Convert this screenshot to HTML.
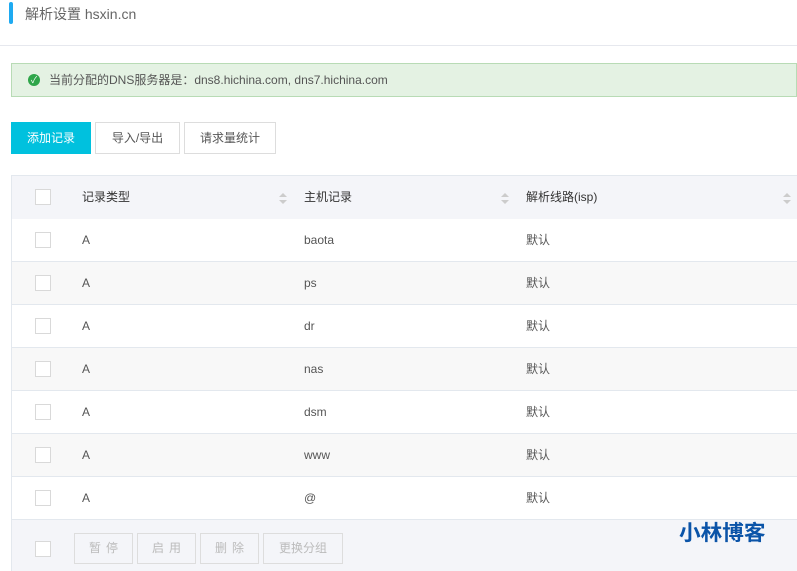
<!DOCTYPE html><html><head><meta charset="utf-8"><style>
body{margin:0;width:797px;height:571px;overflow:hidden;background:#fff;font-family:"Liberation Sans","Noto Sans CJK SC",sans-serif;color:#333;font-size:12px;position:relative;line-height:16px}
.a{position:absolute}
.cb{position:absolute;width:14px;height:14px;border:1px solid #d9d9d9;background:#fff;left:35px}
.row{position:absolute;left:11px;width:786px;height:42px;border-bottom:1px solid #e3e8ee;border-left:1px solid #e3e8ee}
.row span{position:absolute;top:13px;font-size:12px;color:#555;line-height:16px}
.sort{position:absolute;width:0;height:0;border-left:4px solid transparent;border-right:4px solid transparent}
.btn{position:absolute;top:533px;height:29px;border:1px solid #ddd;color:#bbb;text-align:center;line-height:29px;font-size:12px;letter-spacing:5px}
</style></head><body>
<div class="a" style="left:9px;top:2px;width:4px;height:22px;background:#1eaaf1;border-radius:2px"></div>
<div class="a" style="left:25px;top:6px;font-size:14px;color:#666">解析设置 hsxin.cn</div>
<div class="a" style="left:0;top:45px;width:797px;height:1px;background:#e6e8ee"></div>
<div class="a" style="left:11px;top:63px;width:786px;height:34px;background:#e4f2e3;border:1px solid #b8dbb5;box-sizing:border-box"></div>
<div class="a" style="left:28px;top:74px;width:12px;height:12px;border-radius:50%;background:#2fa64a;color:#fff;font-size:9px;line-height:12px;text-align:center">✓</div>
<div class="a" style="left:49px;top:72px;color:#555">当前分配的DNS服务器是：dns8.hichina.com, dns7.hichina.com</div>
<div class="a" style="left:11px;top:122px;width:80px;height:32px;background:#00c1de;color:#fff;line-height:32px;text-align:center">添加记录</div>
<div class="a" style="left:95px;top:122px;width:83px;height:30px;border:1px solid #ddd;color:#555;line-height:30px;text-align:center">导入/导出</div>
<div class="a" style="left:184px;top:122px;width:90px;height:30px;border:1px solid #ddd;color:#555;line-height:30px;text-align:center">请求量统计</div>
<div class="a" style="left:11px;top:175px;width:786px;height:43px;background:#f4f5f9;border:1px solid #e3e8ee;border-right:none"></div>
<div class="cb" style="top:189px"></div>
<div class="a" style="left:82px;top:189px;color:#333">记录类型</div>
<div class="a" style="left:304px;top:189px;color:#333">主机记录</div>
<div class="a" style="left:526px;top:189px;color:#333">解析线路(isp)</div>
<div class="sort" style="left:279px;top:193px;border-bottom:4px solid #ccc"></div><div class="sort" style="left:279px;top:200px;border-top:4px solid #ccc"></div>
<div class="sort" style="left:501px;top:193px;border-bottom:4px solid #ccc"></div><div class="sort" style="left:501px;top:200px;border-top:4px solid #ccc"></div>
<div class="sort" style="left:783px;top:193px;border-bottom:4px solid #ccc"></div><div class="sort" style="left:783px;top:200px;border-top:4px solid #ccc"></div>
<div class="row" style="top:219px;background:#fff"><span style="left:70px">A</span><span style="left:292px">baota</span><span style="left:514px">默认</span></div>
<div class="row" style="top:262px;background:#f8f8f8"><span style="left:70px">A</span><span style="left:292px">ps</span><span style="left:514px">默认</span></div>
<div class="row" style="top:305px;background:#fff"><span style="left:70px">A</span><span style="left:292px">dr</span><span style="left:514px">默认</span></div>
<div class="row" style="top:348px;background:#f8f8f8"><span style="left:70px">A</span><span style="left:292px">nas</span><span style="left:514px">默认</span></div>
<div class="row" style="top:391px;background:#fff"><span style="left:70px">A</span><span style="left:292px">dsm</span><span style="left:514px">默认</span></div>
<div class="row" style="top:434px;background:#f8f8f8"><span style="left:70px">A</span><span style="left:292px">www</span><span style="left:514px">默认</span></div>
<div class="row" style="top:477px;background:#fff"><span style="left:70px">A</span><span style="left:292px">@</span><span style="left:514px">默认</span></div>
<div class="cb" style="top:232px"></div><div class="cb" style="top:275px"></div><div class="cb" style="top:318px"></div><div class="cb" style="top:361px"></div><div class="cb" style="top:404px"></div><div class="cb" style="top:447px"></div><div class="cb" style="top:490px"></div>
<div class="a" style="left:11px;top:520px;width:786px;height:51px;background:#f4f5f9;border-left:1px solid #e3e8ee"></div>
<div class="cb" style="top:541px"></div>
<div class="btn" style="left:74px;width:57px;text-indent:5px">暂停</div>
<div class="btn" style="left:137px;width:57px;text-indent:5px">启用</div>
<div class="btn" style="left:200px;width:57px;text-indent:5px">删除</div>
<div class="btn" style="left:263px;width:78px;letter-spacing:0">更换分组</div>
<div class="a" style="left:679px;top:522px;font-size:21px;line-height:24px;font-weight:bold;color:#0b54a8;transform:scaleX(1.03);transform-origin:left">小林博客</div>
</body></html>
